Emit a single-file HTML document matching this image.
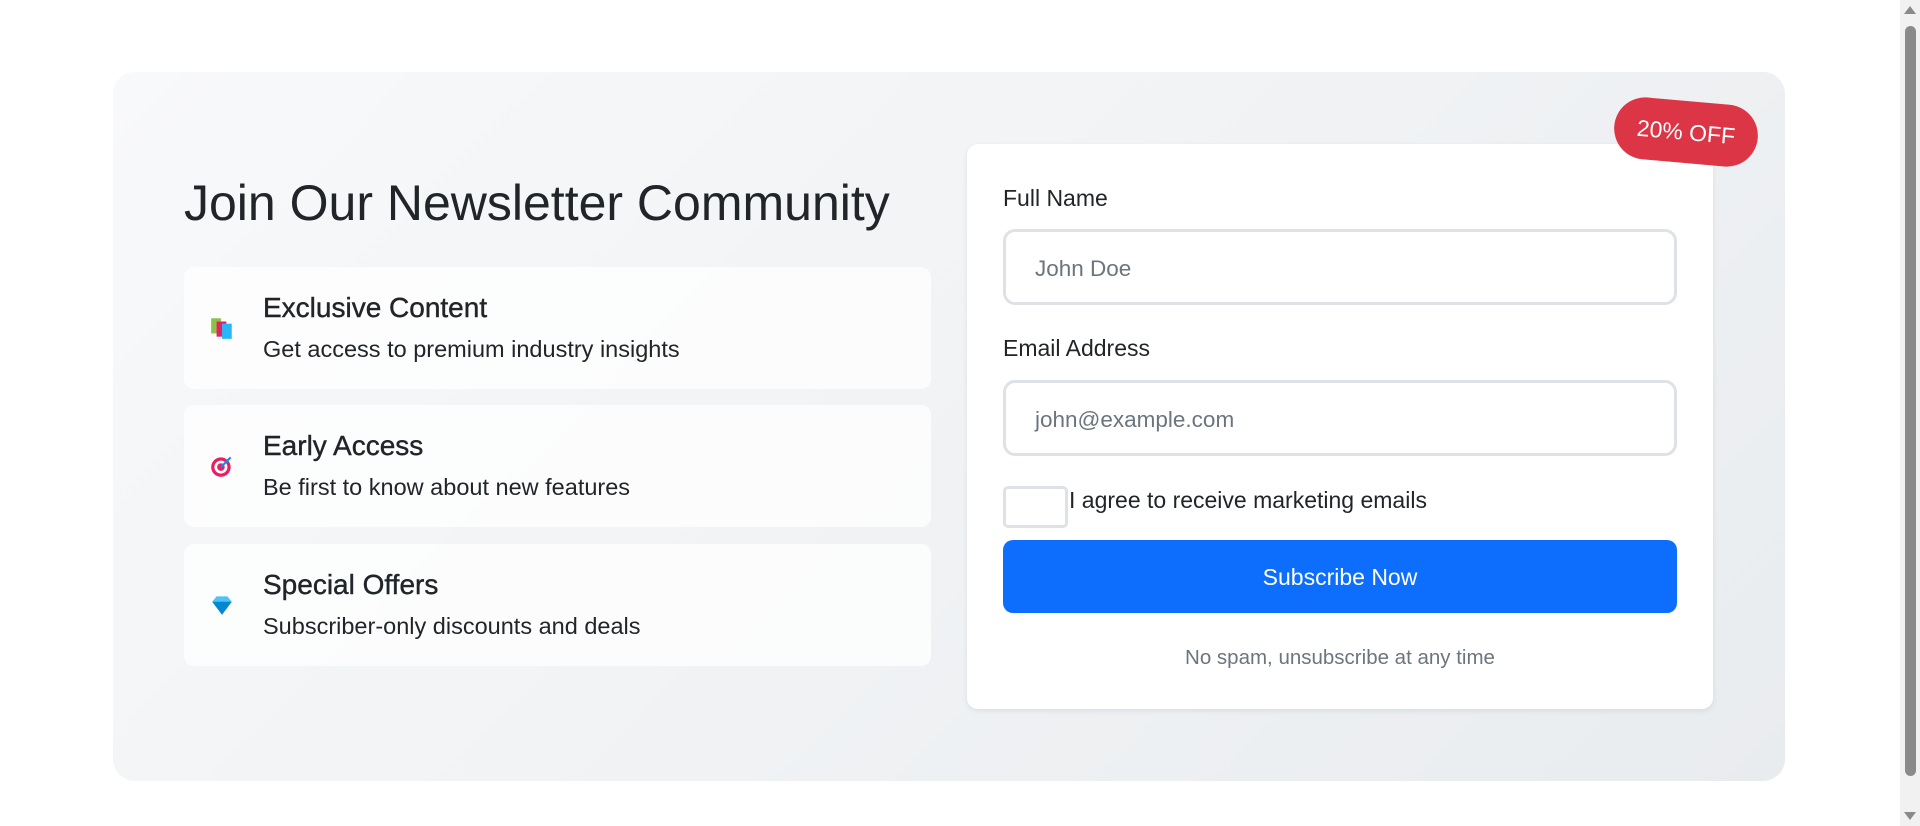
<!DOCTYPE html>
<html><head><meta charset="utf-8"><style>
*{box-sizing:border-box;margin:0;padding:0}
body{width:1920px;height:826px;overflow:hidden;background:#fff;font-family:"Liberation Sans",sans-serif;color:#212529;position:relative}
.wrap{position:absolute;left:113px;top:72px;width:1672px;height:709px;border-radius:22px;background:linear-gradient(135deg,#f8f9fa,#e9ecef)}
h1{position:absolute;left:71px;top:102px;font-size:50px;font-weight:400;letter-spacing:0px;white-space:nowrap}
.f{position:absolute;left:71px;width:747px;height:122px;background:rgba(255,255,255,.75);border-radius:10px}
.f .ic{position:absolute;left:25px;top:48px;width:26px;height:26px}
.f h3{position:absolute;left:79px;top:25px;font-size:28px;font-weight:400;-webkit-text-stroke:0.4px #212529}
.f p{position:absolute;left:79px;top:69px;font-size:23.5px}
.card{position:absolute;left:854px;top:72px;width:746px;height:565px;background:#fff;border-radius:11px;box-shadow:0 2px 6px rgba(0,0,0,.08)}
.lab{position:absolute;left:36px;font-size:23px}
.in{position:absolute;left:36px;width:674px;height:76px;border:3px solid #dee2e6;border-radius:12px;font-size:22.5px;color:#6c757d;padding:24px 0 0 29px}
.cb{position:absolute;left:36px;top:342px;width:65px;height:42px;border:3px solid #dee2e6;border-radius:5px}
.btn{position:absolute;left:36px;top:396px;width:674px;height:73px;background:#0d6efd;border-radius:10px;color:#fff;font-size:23px;text-align:center;line-height:75px}
.ns{position:absolute;left:0;width:746px;top:502px;text-align:center;font-size:20.5px;color:#6c757d}
.badge{position:absolute;left:1501px;top:29px;width:144px;height:62px;background:#dc3545;color:#fff;border-radius:31px;font-size:23px;text-align:center;line-height:62px;transform:rotate(5deg)}
.sb{position:absolute;right:0;top:0;width:20px;height:826px;background:#f1f1f1}
.sb div{position:absolute;left:5px;top:26px;width:11px;height:750px;background:#8a8a8a;border-radius:6px}
.sb .a{position:absolute;left:4px;width:0;height:0;border-left:6px solid transparent;border-right:6px solid transparent}
</style></head><body>
<div class="wrap">
<h1>Join Our Newsletter Community</h1>
<div class="f" style="top:195px"><svg class="ic" viewBox="0 0 24 24"><rect x="2" y="3" width="9" height="14" fill="#8bc34a"/><rect x="7" y="6" width="9" height="14" fill="#e91e63"/><rect x="12" y="8" width="9" height="14" fill="#29b6f6"/></svg><h3>Exclusive Content</h3><p>Get access to premium industry insights</p></div>
<div class="f" style="top:333px"><svg class="ic" viewBox="0 0 24 24"><circle cx="11" cy="13" r="9" fill="#e91e63"/><circle cx="11" cy="13" r="6" fill="#fff"/><circle cx="11" cy="13" r="3.5" fill="#e91e63"/><path d="M11 13L20 4" stroke="#1e88e5" stroke-width="2"/></svg><h3>Early Access</h3><p>Be first to know about new features</p></div>
<div class="f" style="top:472px"><svg class="ic" viewBox="0 0 24 24"><path d="M3 9L7 4H17L21 9L12 21Z" fill="#4fc3f7"/><path d="M3 9H21L12 21Z" fill="#0288d1"/></svg><h3>Special Offers</h3><p>Subscriber-only discounts and deals</p></div>
<div class="card">
<div class="lab" style="top:41px">Full Name</div>
<div class="in" style="top:85px">John Doe</div>
<div class="lab" style="top:191px">Email Address</div>
<div class="in" style="top:236px">john@example.com</div>
<div class="cb"></div>
<div class="lab" style="left:102px;top:343px">I agree to receive marketing emails</div>
<div class="btn">Subscribe Now</div>
<div class="ns">No spam, unsubscribe at any time</div>
</div>
<div class="badge">20% OFF</div>
</div>
<div class="sb"><div></div><span class="a" style="top:6px;border-bottom:8px solid #8a8a8a"></span><span class="a" style="top:812px;border-top:8px solid #8a8a8a"></span></div>
</body></html>
